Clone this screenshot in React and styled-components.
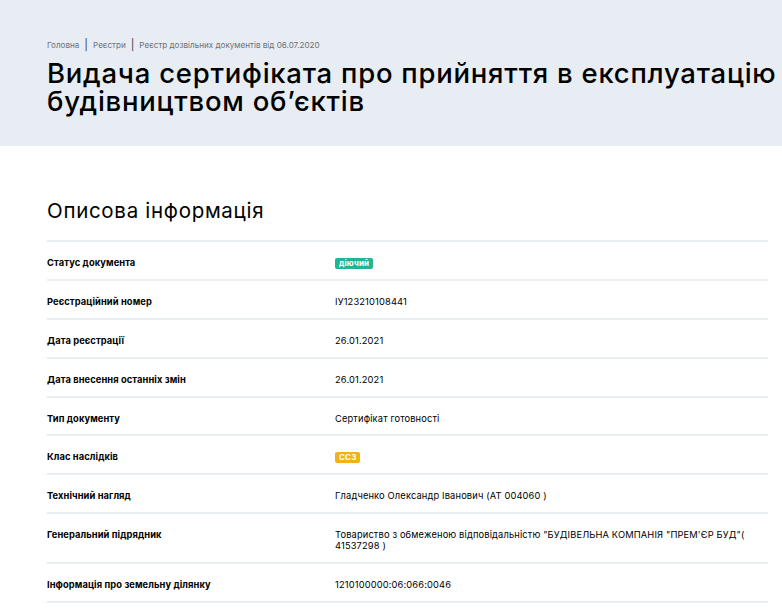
import React from "react";
import styled, { createGlobalStyle } from "styled-components";

const rows = [
  { label: "Статус документа", badge: "active", value: "діючий" },
  { label: "Реєстраційний номер", value: "ІУ123210108441" },
  { label: "Дата реєстрації", value: "26.01.2021" },
  { label: "Дата внесення останніх змін", value: "26.01.2021" },
  { label: "Тип документу", value: "Сертифікат готовності" },
  { label: "Клас наслідків", badge: "warn", value: "СС3" },
  { label: "Технічний нагляд", value: "Гладченко Олександр Іванович (АТ 004060 )" },
  {
    label: "Генеральний підрядник",
    value: 'Товариство з обмеженою відповідальністю "БУДІВЕЛЬНА КОМПАНІЯ "ПРЕМ\'ЄР БУД"( 41537298 )',
  },
  { label: "Інформація про земельну ділянку", value: "1210100000:06:066:0046" },
];

const App = () => {
  return (
    <>
      <GlobalStyle />
      <Header>
        <Breadcrumbs>
          <Crumb>Головна</Crumb>
          <Divider>|</Divider>
          <Crumb>Реєстри</Crumb>
          <Divider>|</Divider>
          <Crumb>Реєстр дозвільних документів від 06.07.2020</Crumb>
        </Breadcrumbs>
        <Title>
          Видача сертифіката про прийняття в експлуатацію
          <br />
          будівництвом об’єктів
        </Title>
      </Header>
      <Content>
        <SectionTitle>Описова інформація</SectionTitle>
        <InfoTable>
          {rows.map((row) => (
            <Row key={row.label}>
              <Label>{row.label}</Label>
              <Value>
                {row.badge ? <Badge $kind={row.badge}>{row.value}</Badge> : row.value}
              </Value>
            </Row>
          ))}
        </InfoTable>
      </Content>
    </>
  );
};

export default App;

const GlobalStyle = createGlobalStyle`
  html, body {
    margin: 0;
    padding: 0;
    background: #fff;
    overflow: hidden;
  }
  body {
    font-family: Inter, "Noto Sans", sans-serif;
    color: #000;
  }
`;

const Header = styled.header`
  background-color: #e7edf3;
  height: 146px;
  padding: 39px 0px 0px 47px;
  box-sizing: border-box;
`;

const Breadcrumbs = styled.nav`
  display: flex;
  align-items: center;
  gap: 5px;
  font-size: 8.1px;
  color: #6c717a;
  height: 12px;
`;

const Crumb = styled.span``;

const Divider = styled.span`
  font-size: 11px;
  color: #3a3f47;
`;

const Title = styled.h1`
  margin: 8px 0px 0px 0px;
  font-size: 27.5px;
  font-weight: 500;
  line-height: 28px;
  white-space: nowrap;
  letter-spacing: 0.75px;
`;

const Content = styled.main`
  padding: 53px 14px 0px 47px;
`;

const SectionTitle = styled.h2`
  margin: 0px 0px 17px 0px;
  font-size: 20.5px;
  font-weight: 400;
  line-height: 24px;
  letter-spacing: 0.7px;
`;

const InfoTable = styled.div`
  border-bottom: 2px solid #e9eef3;
`;

const Row = styled.div`
  display: grid;
  grid-template-columns: 288px 1fr;
  align-items: start;
  border-top: 2px solid #e9eef3;
  padding: 16px 0px 10px 0px;
  font-size: 9.3px;
  line-height: 10.85px;
`;

const Label = styled.div`
  font-weight: 700;
  letter-spacing: 0.1px;
`;

const Value = styled.div`
  font-weight: 400;
  letter-spacing: 0.15px;
`;

const Badge = styled.span`
  display: inline-block;
  padding: 0px 4px;
  height: 11px;
  line-height: 11px;
  border-radius: 2px;
  font-size: 8px;
  font-weight: 700;
  color: #fff;
  background-color: ${(p) => (p.$kind === "active" ? "#1fb597" : "#f5b01c")};
`;
